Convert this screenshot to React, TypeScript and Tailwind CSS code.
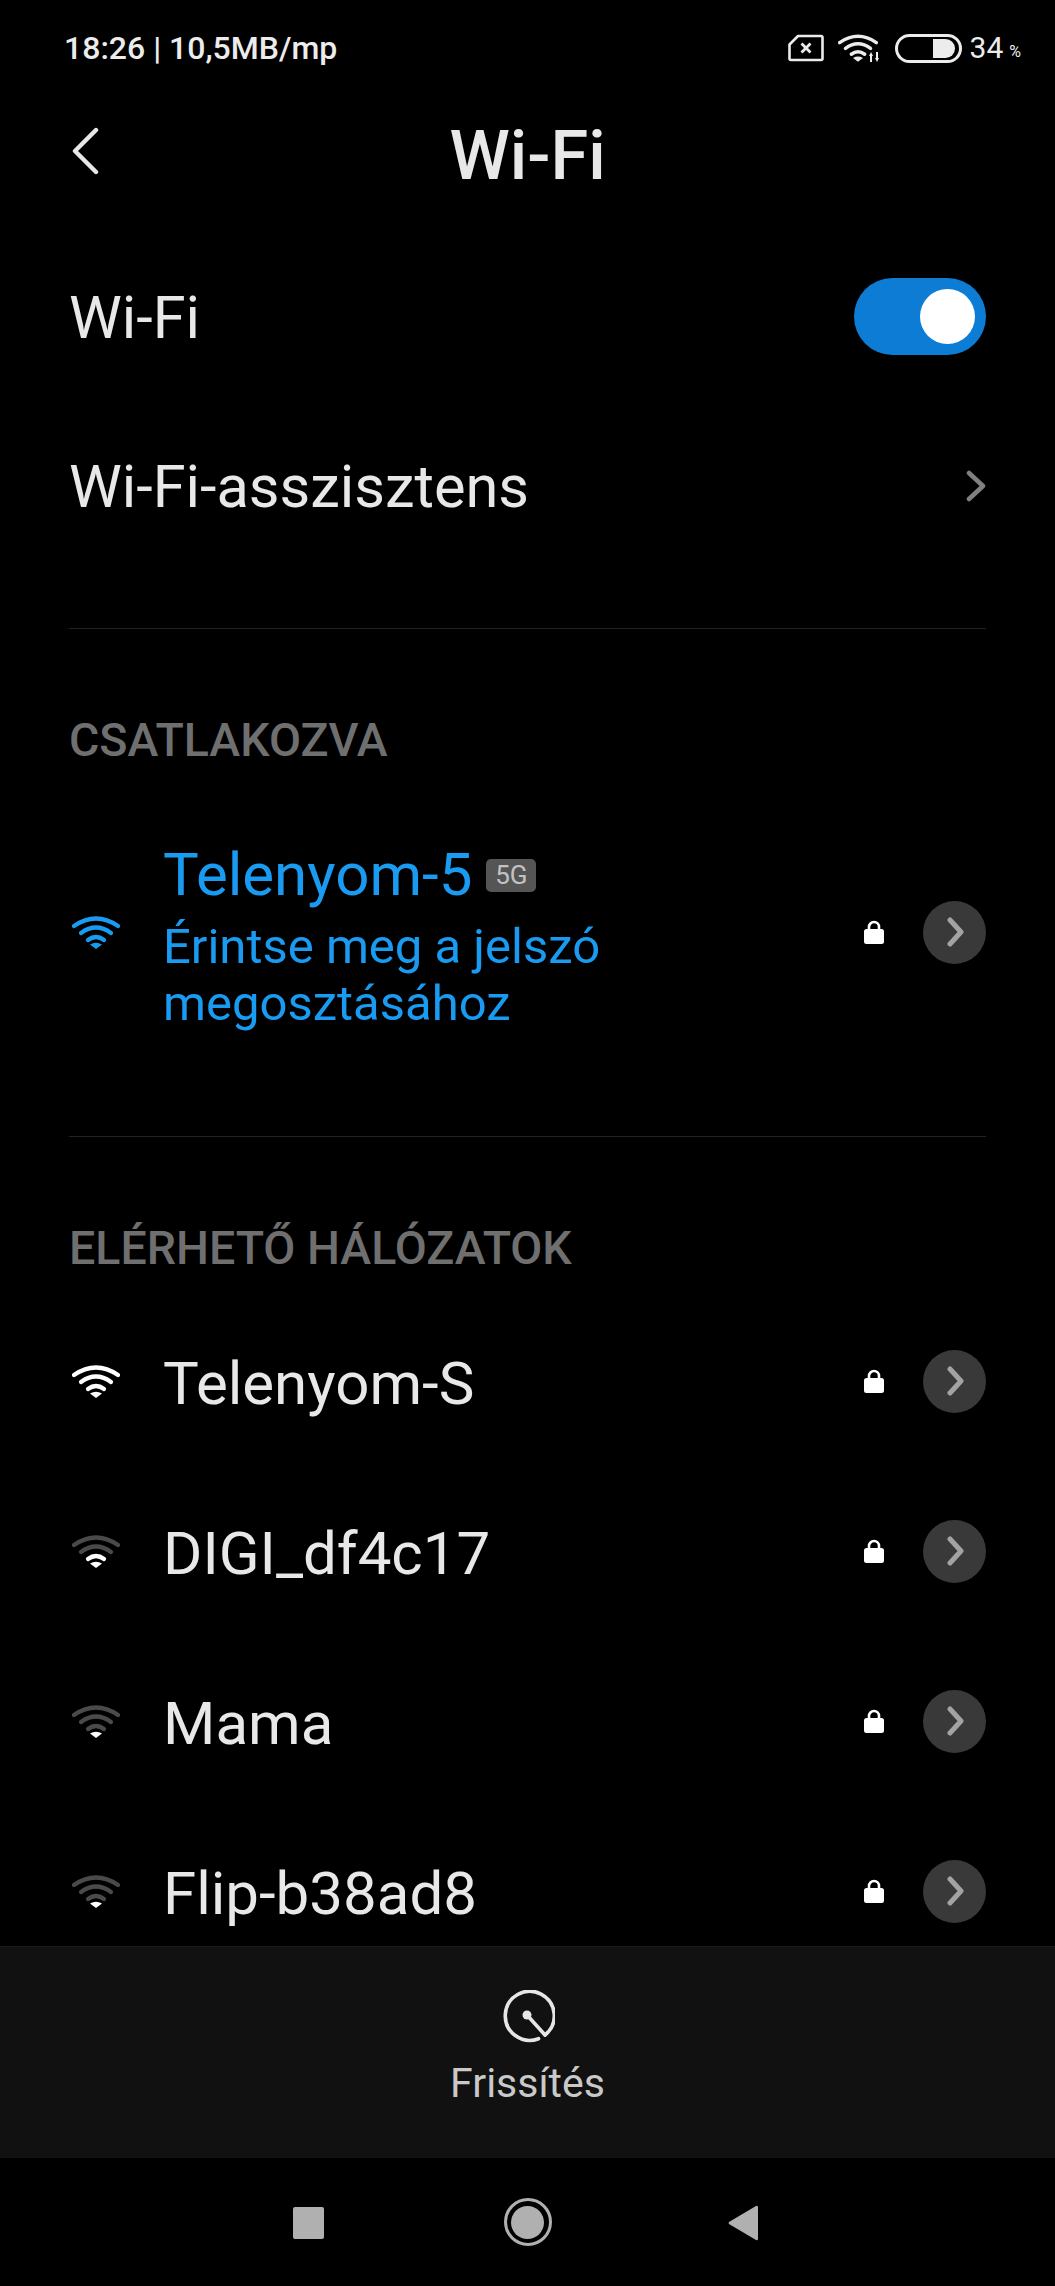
const font = { fontFamily: 'Roboto, sans-serif' };

type WifiProps = { level: number; on: string; off?: string; className?: string };

function WifiIcon({ level, on, off = '#4a4a4a', className = 'ml-[3px] w-[48px] h-[33px]' }: WifiProps) {
  const c = (n: number) => (level >= n ? on : off);
  return (
    <svg viewBox="0 0 48 33" className={className} fill="none" strokeWidth="4.2" strokeLinecap="round">
      <path d="M2 10 Q24 -5 46 10" stroke={c(4)} />
      <path d="M9 17 Q24 6 39 17" stroke={c(3)} />
      <path d="M16 24 Q24 18 32 24" stroke={c(2)} />
      <path d="M18 28.5 Q24 25 30 28.5 L24 33 Z" fill={c(1)} stroke="none" />
    </svg>
  );
}

function LockIcon() {
  return (
    <svg viewBox="0 0 20 24" className="w-[20px] h-[24px]">
      <path d="M5 10 V7 a5 5 0 0 1 10 0 V10" fill="none" stroke="#fff" strokeWidth="2.6" />
      <rect x="0" y="9" width="20" height="15" rx="2.5" fill="#fff" />
    </svg>
  );
}

function RowActions() {
  return (
    <div className="flex items-center">
      <LockIcon />
      <div className="ml-[39px] w-[63px] h-[63px] pl-[3px] rounded-full bg-[#393939] flex items-center justify-center">
        <svg viewBox="0 0 20 30" className="w-[20px] h-[30px]" fill="none" stroke="#a3a3a3" strokeWidth="5" strokeLinecap="round" strokeLinejoin="round">
          <path d="M4 3 L15 15 L4 27" />
        </svg>
      </div>
    </div>
  );
}

function NetworkRow({ name, level }: { name: string; level: number }) {
  return (
    <div className="h-[170px] flex items-center">
      <div className="w-[94px] shrink-0">
        <WifiIcon level={level} on="#ffffff" />
      </div>
      <div className="flex-1 mt-[5px] text-[60px] text-[#e8e8e8] leading-none">{name}</div>
      <RowActions />
    </div>
  );
}

export default function App() {
  const networks = [
    { name: 'Telenyom-S', level: 4 },
    { name: 'DIGI_df4c17', level: 2 },
    { name: 'Mama', level: 1 },
    { name: 'Flip-b38ad8', level: 1 },
  ];

  return (
    <div className="w-[1055px] h-[2286px] bg-black flex flex-col overflow-hidden" style={font}>
      {/* status bar */}
      <div className="h-[96px] shrink-0 pl-[64px] pr-[34px] flex items-center justify-between text-[#ececec]">
        <div className="text-[32px] font-medium leading-none">18:26 | 10,5MB/mp</div>
        <div className="flex items-center">
          <svg viewBox="0 0 36 28" className="w-[36px] h-[28px]" fill="none" stroke="#ececec" strokeWidth="2.6" strokeLinejoin="round">
            <path d="M10 2 H33 a1.5 1.5 0 0 1 1.5 1.5 V24.5 a1.5 1.5 0 0 1 -1.5 1.5 H3 a1.5 1.5 0 0 1 -1.5 -1.5 V10.5 Z" />
            <path d="M13.5 9.5 L22.5 18.5 M22.5 9.5 L13.5 18.5" strokeWidth="2.8" />
          </svg>
          <div className="relative ml-[14px] w-[42px] h-[28px]">
            <WifiIcon level={4} on="#ececec" className="w-[40px] h-[28px]" />
            <svg viewBox="0 0 12 10" className="absolute right-0 bottom-0 w-[12px] h-[10px]" fill="#ececec">
              <path d="M3 0 L5 4 H4 V10 H2 V4 H1 Z M9 10 L11 6 H10 V0 H8 V6 H7 Z" />
            </svg>
          </div>
          <div className="ml-[15px] w-[67px] h-[29px] rounded-full border-[3px] border-[#ececec] flex items-center justify-end pr-[4px]">
            <div className="w-[22px] h-[19px] bg-[#ececec] rounded-r-full" />
          </div>
          <div className="ml-[8px] text-[30px] leading-none">34</div>
          <div className="ml-[6px] mt-[7px] text-[16px] leading-none">%</div>
        </div>
      </div>

      {/* header */}
      <div className="relative h-[114px] shrink-0 flex items-center justify-center">
        <svg viewBox="0 0 30 48" className="absolute left-[70px] top-[31px] w-[30px] h-[48px]" fill="none" stroke="#e8e8e8" strokeWidth="4.4" strokeLinecap="round" strokeLinejoin="round">
          <path d="M26 3 L5 24 L26 45" />
        </svg>
        <div className="mt-[6px] text-[68.5px] font-medium text-[#e8e8e8] leading-none">Wi-Fi</div>
      </div>

      <div className="flex-1 min-h-0 overflow-hidden px-[69px]">
        <div className="h-[172px] mt-[20px] flex items-center justify-between">
          <div className="mt-[6px] text-[59.5px] text-[#e8e8e8] leading-none">Wi-Fi</div>
          <div className="w-[132px] h-[77px] rounded-full bg-[#0c7cd5] flex items-center justify-end pr-[11px]">
            <div className="w-[55px] h-[55px] rounded-full bg-white" />
          </div>
        </div>
        <div className="h-[172px] flex items-center justify-between">
          <div className="text-[59.5px] text-[#e8e8e8] leading-none">Wi-Fi-asszisztens</div>
          <svg viewBox="0 0 20 32" className="w-[20px] h-[32px] -mt-[4px]" fill="none" stroke="#808080" strokeWidth="4.5" strokeLinecap="round" strokeLinejoin="round">
            <path d="M3 3 L17 16 L3 29" />
          </svg>
        </div>
        <div className="mt-[54px] h-px bg-[#222222]" />

        <div className="pt-[91px] text-[46.5px] font-medium text-[#6f6f6f] leading-[40px]">CSATLAKOZVA</div>

        <div className="mt-[62px] h-[220px] flex items-center">
          <div className="w-[94px] shrink-0">
            <WifiIcon level={4} on="#1a9bf2" />
          </div>
          <div className="flex-1 mt-[10px]">
            <div className="flex items-center">
              <div className="text-[60px] text-[#1a9bf2] leading-[66px]">Telenyom-5</div>
              <div className="ml-[14px] w-[50px] h-[33px] rounded-[5px] bg-[#555555] text-[#c2c2c2] text-[26px] leading-[33px] text-center">5G</div>
            </div>
            <div className="text-[49px] text-[#1a9bf2] leading-[57px] mt-[10px] w-[480px]">Érintse meg a jelszó megosztásához</div>
          </div>
          <RowActions />
        </div>

        <div className="mt-[94px] h-px bg-[#222222]" />
        <div className="pt-[91px] text-[46.5px] font-medium text-[#6f6f6f] leading-[40px]">ELÉRHETŐ HÁLÓZATOK</div>

        <div className="mt-[28px]">
          {networks.map((n) => (
            <NetworkRow key={n.name} name={n.name} level={n.level} />
          ))}
        </div>
      </div>

      {/* bottom action */}
      <div className="h-[212px] shrink-0 bg-[#111111] border-t border-[#1c1c1c] flex flex-col items-center">
        <svg viewBox="0 0 54 54" className="mt-[43px] w-[54px] h-[54px]" fill="none" stroke="#e6e6e6" strokeWidth="3.6" strokeLinecap="round">
          <path d="M37.5 48.7 A24.5 24.5 0 1 1 44 45" />
          <path d="M26 25 L44 45" />
          <circle cx="26" cy="25" r="4.5" fill="#e6e6e6" stroke="none" />
        </svg>
        <div className="mt-[17px] text-[41px] text-[#c9c9c9] leading-[44px]">Frissítés</div>
      </div>

      {/* nav bar */}
      <div className="h-[128px] shrink-0 relative flex items-center justify-center">
        <div className="absolute left-[293px] top-[49px] w-[31px] h-[32px] rounded-[2px] bg-[#b0b0b0]" />
        <div className="w-[48px] h-[48px] rounded-full border-[3px] border-[#b0b0b0] flex items-center justify-center">
          <div className="w-[33px] h-[33px] rounded-full bg-[#b0b0b0]" />
        </div>
        <svg viewBox="0 0 30 36" className="absolute left-[728px] top-[47px] w-[30px] h-[36px]" fill="#b0b0b0">
          <path d="M30 2 V34 a1.5 1.5 0 0 1 -2 1 L1 19 a1.5 1.5 0 0 1 0 -2 L28 1 a1.5 1.5 0 0 1 2 1 Z" />
        </svg>
      </div>
    </div>
  );
}
